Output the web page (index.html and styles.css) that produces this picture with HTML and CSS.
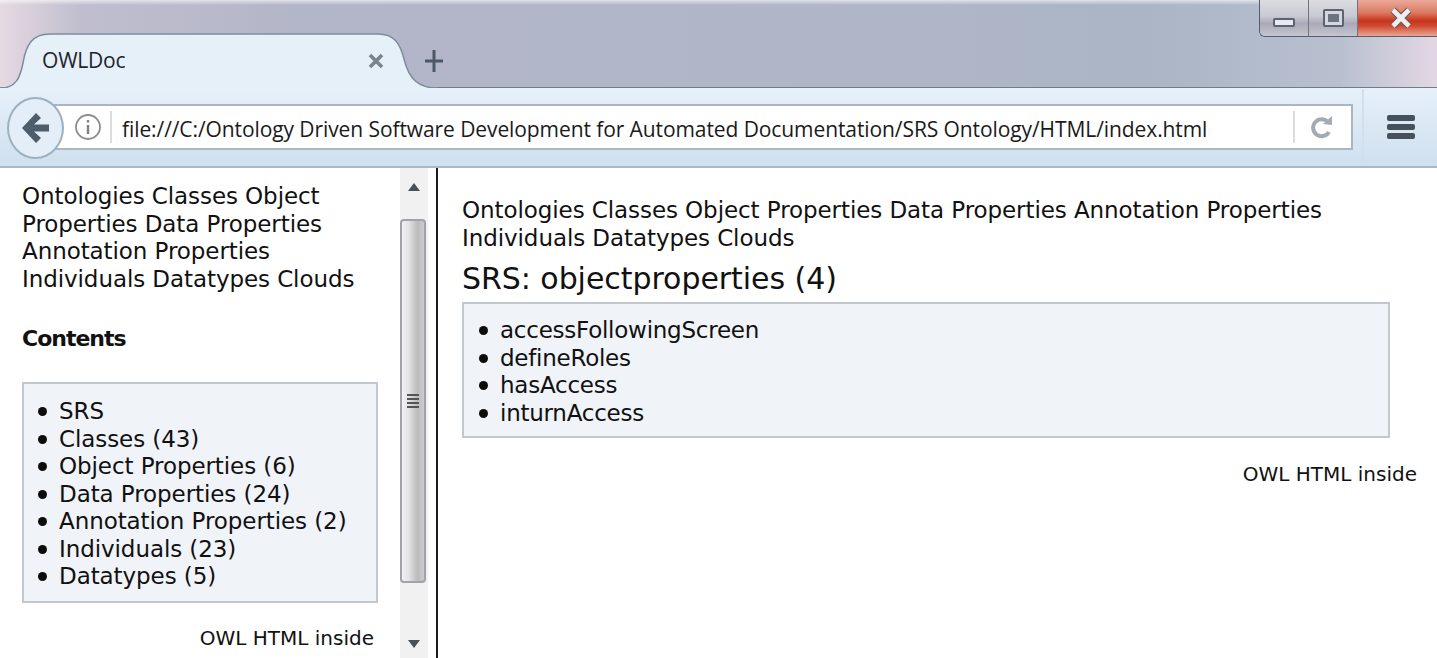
FILE: index.html

```html
<!DOCTYPE html>
<html lang="en">
<head>
  <meta charset="UTF-8" />
  <title>OWLDoc</title>
  <link rel="stylesheet" href="styles.css">
</head>
<body>
  <div class="titlebar">
    <div class="tab">
      <svg class="tab-shape" width="450" height="56" viewBox="0 0 450 56">
        <path d="M0 56 C16 55 20 45 23 30 C26 12 32 1 50 1 L378 1 C394 1 400 10 404 26 C409 46 418 55 438 56 Z" fill="#e6f0f9"/>
        <path d="M0 55 C16 55 20 45 23 30 C26 12 32 1 50 1 L378 1 C394 1 400 10 404 26 C409 46 418 55 438 55" fill="none" stroke="#7f8c9b" stroke-width="1.5"/>
      </svg>
      <span class="tab-title">OWLDoc</span>
      <svg class="tab-close" width="16" height="16" viewBox="0 0 16 16">
        <path d="M2 2 L14 14 M14 2 L2 14" stroke="#7b838c" stroke-width="3.6"/>
      </svg>
    </div>
    <svg class="newtab" width="20" height="24" viewBox="0 0 20 24">
      <path d="M10 1 V23 M1 12 H19" stroke="#4d5865" stroke-width="3"/>
    </svg>
    <div class="wincontrols">
      <div class="winbtn"><span class="min-glyph"></span></div>
      <div class="winbtn"><span class="max-glyph"></span></div>
      <div class="winbtn close">
        <svg width="24" height="22" viewBox="0 0 24 22">
          <path d="M4 3 L20 19 M20 3 L4 19" stroke="#6b5a58" stroke-width="7"/>
          <path d="M4 3 L20 19 M20 3 L4 19" stroke="#efeeee" stroke-width="4.6"/>
        </svg>
      </div>
    </div>
  </div>

  <div class="toolbar">
    <div class="back">
      <svg width="27" height="30" viewBox="0 0 27 30">
        <path d="M14 0 L0 15 L14 30 L19 25 L12 18.5 H27 V11.5 H12 L19 5 Z" fill="#4f5d6b"/>
      </svg>
    </div>
    <div class="urlbar">
      <svg class="info" width="28" height="28" viewBox="0 0 28 28">
        <circle cx="14" cy="14" r="12" fill="none" stroke="#8c8c8c" stroke-width="1.8"/>
        <path d="M14 12 V21 M14 7 V9.5" stroke="#7f7f7f" stroke-width="2.4"/>
      </svg>
      <span class="sep"></span>
      <span class="url">file:///C:/Ontology Driven Software Development for Automated Documentation/SRS Ontology/HTML/index.html</span>
      <span class="sep reload-sep"></span>
      <svg class="reload" width="24" height="26" viewBox="0 0 24 26">
        <path d="M18 8 A8.5 8.5 0 1 0 19 18" fill="none" stroke="#a3abb3" stroke-width="4"/>
        <path d="M13 10 L22 2 V11 Z" fill="#a3abb3"/>
      </svg>
    </div>
    <div class="menu">
      <span></span><span></span><span></span>
    </div>
  </div>

  <div class="frames">
    <div class="left-frame">
      <div class="left-content">
        <div class="nav">Ontologies Classes Object Properties Data Properties Annotation Properties Individuals Datatypes Clouds</div>
        <h4 class="contents-title">Contents</h4>
        <ul class="box left-box">
          <li>SRS</li>
          <li>Classes (43)</li>
          <li>Object Properties (6)</li>
          <li>Data Properties (24)</li>
          <li>Annotation Properties (2)</li>
          <li>Individuals (23)</li>
          <li>Datatypes (5)</li>
        </ul>
        <div class="inside left-inside">OWL HTML inside</div>
      </div>
      <div class="scrollbar">
        <svg class="arrow" width="12" height="8" viewBox="0 0 12 8"><path d="M6 0 L12 8 H0 Z" fill="#4a5058"/></svg>
        <div class="thumb">
          <span class="grip"></span><span class="grip"></span><span class="grip"></span><span class="grip"></span>
        </div>
        <svg class="arrow arrow-down" width="12" height="8" viewBox="0 0 12 8"><path d="M0 0 H12 L6 8 Z" fill="#4a5058"/></svg>
      </div>
    </div>
    <div class="right-frame">
      <div class="nav">Ontologies Classes Object Properties Data Properties Annotation Properties Individuals Datatypes Clouds</div>
      <h1 class="page-title">SRS: objectproperties (4)</h1>
      <ul class="box right-box">
        <li>accessFollowingScreen</li>
        <li>defineRoles</li>
        <li>hasAccess</li>
        <li>inturnAccess</li>
      </ul>
      <div class="inside right-inside">OWL HTML inside</div>
    </div>
  </div>
</body>
</html>
```

FILE: styles.css

```css
html, body {
  margin: 0;
  padding: 0;
  height: 658px;
  overflow: hidden;
}
body {
  font-family: "DejaVu Sans", Verdana, sans-serif;
  color: #111;
  background: #fff;
  display: flex;
  flex-direction: column;
}

/* browser chrome */
.titlebar {
  height: 88px;
  flex: none;
  position: relative;
  display: flex;
  align-items: flex-start;
  padding-top: 33px;
  box-sizing: border-box;
  background:
    linear-gradient(to bottom, rgba(255,255,255,0.6) 0, rgba(255,255,255,0) 5px),
    linear-gradient(to right, #e6d9e2 0, #c0bece 80px, #b3b6c8 300px, #b0b6c8 800px, #abb5c6 1150px, #b8c0d0 1340px, #e3d7e3 1437px);
  border-bottom: 1px solid #6f7c8b;
}
.tab {
  position: relative;
  width: 412px;
  height: 55px;
  display: flex;
  align-items: center;
  flex: none;
}
.tab-shape {
  position: absolute;
  left: 0;
  top: 0;
}
.tab-title {
  position: relative;
  margin-left: 42px;
  margin-bottom: 1px;
  font-family: "Open Sans", sans-serif;
  font-size: 21px;
  letter-spacing: -0.2px;
  color: #1c2530;
  flex: 1;
}
.tab-close {
  position: relative;
  margin-right: 28px;
}
.newtab {
  margin: 16px 0 0 12px;
}
.wincontrols {
  position: absolute;
  top: 0;
  right: 0;
  height: 36px;
  display: flex;
  border-left: 1px solid #555e6a;
  border-bottom: 1px solid #555e6a;
  border-bottom-left-radius: 6px;
  overflow: hidden;
}
.winbtn {
  width: 48px;
  display: flex;
  align-items: center;
  justify-content: center;
  background: linear-gradient(to bottom, #dcdce2 0, #c9c9d2 45%, #a9a9b8 65%, #c6c6d0 100%);
  border-right: 1px solid #6f7480;
}
.winbtn.close {
  width: 79px;
  border-right: 0;
  background: linear-gradient(to bottom, #eba99b 0, #dc7a62 35%, #c8341c 58%, #cf4a30 72%, #eaa696 100%);
}
.winbtn.close svg {
  margin: 0 0 1px 6px;
}
.min-glyph {
  width: 22px;
  height: 9px;
  margin-top: 9px;
  background: #e9eaef;
  border: 2px solid #5b6470;
  border-radius: 2px;
  box-sizing: border-box;
}
.max-glyph {
  width: 21px;
  height: 18px;
  margin-bottom: 1px;
  border: 2px solid #5b6470;
  border-radius: 2px;
  box-sizing: border-box;
  background: #6b7480;
  box-shadow: inset 0 0 0 3px #d6d7de;
}

.toolbar {
  height: 80px;
  flex: none;
  box-sizing: border-box;
  display: flex;
  align-items: center;
  position: relative;
  padding-left: 50px;
  background: linear-gradient(to bottom, #e6f0f9 0, #dbe8f4 50%, #cfe0f0 100%);
  border-bottom: 2px solid #a8b8c8;
}
.back {
  position: absolute;
  left: 7px;
  top: 9px;
  width: 57px;
  height: 62px;
  box-sizing: border-box;
  border: 2px solid #9fb0bf;
  border-radius: 50%;
  background: #e3eef8;
  display: flex;
  align-items: center;
  justify-content: center;
  z-index: 1;
}
.urlbar {
  width: 1303px;
  height: 46px;
  box-sizing: border-box;
  display: flex;
  align-items: center;
  background: #fff;
  border: 2px solid #a9b6c3;
  border-left: 0;
}
.info {
  margin-left: 24px;
  flex: none;
}
.sep {
  width: 2px;
  height: 32px;
  background: #dcdcdc;
  margin-left: 8px;
  flex: none;
}
.url {
  font-family: "Open Sans", sans-serif;
  font-size: 21px;
  letter-spacing: -0.09px;
  color: #1a1a1a;
  margin: 4px 0 0 10px;
  white-space: nowrap;
  flex: 1;
}
.reload-sep {
  margin-right: 15px;
}
.reload {
  margin-right: 17px;
  flex: none;
}
.menu {
  margin-left: 9px;
  padding-left: 23px;
  height: 76px;
  border-left: 2px solid #d3e0ec;
  display: flex;
  flex-direction: column;
  justify-content: center;
  gap: 3px;
}
.menu span {
  width: 28px;
  height: 6px;
  border-radius: 2px;
  background: #46515c;
}

/* frames */
.frames {
  flex: 1;
  display: flex;
  min-height: 0;
}
.left-frame {
  width: 438px;
  flex: none;
  box-sizing: border-box;
  display: flex;
  border-right: 2px solid #1a1a1a;
}
.left-content {
  width: 400px;
  flex: none;
  box-sizing: border-box;
  padding: 15px 22px 0;
}
.nav {
  font-size: 23px;
  line-height: 27.5px;
  letter-spacing: -0.08px;
}
.contents-title {
  font-size: 22px;
  line-height: 28px;
  margin: 32px 0 29px;
  font-weight: bold;
  letter-spacing: -1px;
}
.box {
  list-style: none;
  margin: 0;
  background: #f0f3f8;
  border: 2px solid #c3c8cf;
  box-sizing: border-box;
  font-size: 23px;
  line-height: 27.5px;
}
.box li::before {
  content: "";
  display: inline-block;
  width: 9px;
  height: 9px;
  border-radius: 50%;
  background: #0c0c0c;
  margin: 0 12px 2px -21px;
  vertical-align: middle;
}
.left-box {
  padding: 14px 10px 10px 35px;
  letter-spacing: -0.08px;
}
.inside {
  font-size: 20px;
  text-align: right;
}
.left-inside {
  margin: 23px 4px 0 0;
}
.scrollbar {
  width: 28px;
  flex: none;
  box-sizing: border-box;
  background: #f1f1f1;
  display: flex;
  flex-direction: column;
  align-items: center;
  padding: 15px 0 10px;
}
.arrow {
  flex: none;
}
.arrow-down {
  margin-top: auto;
}
.thumb {
  width: 26px;
  height: 364px;
  margin: 28px 2px 0 0;
  box-sizing: border-box;
  border: 2px solid #a0a4aa;
  border-radius: 4px;
  background: linear-gradient(to right, #f2f2f2 0, #e4e4e4 30%, #bcbcbc 70%, #cccccc 100%);
  display: flex;
  flex-direction: column;
  align-items: center;
  justify-content: center;
  gap: 2px;
}
.grip {
  width: 12px;
  height: 2px;
  background: #555;
}
.right-frame {
  flex: 1;
  box-sizing: border-box;
  padding: 29px 20px 0 24px;
}
.page-title {
  font-size: 30px;
  font-weight: normal;
  line-height: 38px;
  letter-spacing: -0.05px;
  margin: 8px 0 4px;
}
.right-box {
  width: 928px;
  padding: 13px 10px 9px 36px;
  letter-spacing: -0.25px;
}
.right-inside {
  margin-top: 24px;
}
```
